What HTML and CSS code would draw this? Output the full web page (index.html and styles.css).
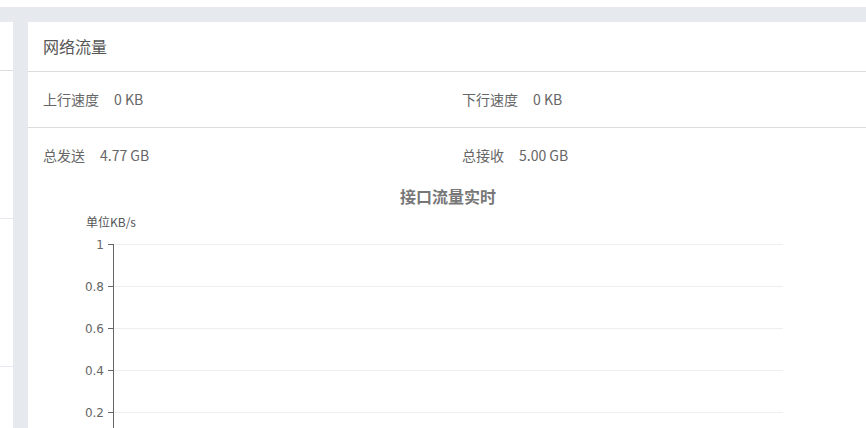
FILE: index.html
```html
<!DOCTYPE html>
<html lang="zh">
  <head>
    <meta charset="utf-8">
    <title>网络流量</title>
    <link rel="stylesheet" href="styles.css">
  </head>
  <body>
    <div class="topbar"></div>
    <div id="wrap">
      <div class="panel panel-side">
        <div class="side-head"></div>
        <div class="side-row"></div>
        <div class="side-row"></div>
      </div>

      <div class="panel panel-main">
        <div class="panel-head">网络流量</div>
        <div class="stat-row line">
          <div class="stat"><span class="label">上行速度</span><span class="value">0 KB</span></div>
          <div class="stat"><span class="label">下行速度</span><span class="value">0 KB</span></div>
        </div>
        <div class="stat-row total">
          <div class="stat"><span class="label">总发送</span><span class="value">4.77 GB</span></div>
          <div class="stat"><span class="label">总接收</span><span class="value">5.00 GB</span></div>
        </div>
        <div class="chart">
          <svg width="838" height="256" viewBox="0 0 838 256">
            <text class="chart-title" x="420" y="31" text-anchor="middle">接口流量实时</text>
            <text class="chart-unit" x="58" y="55">单位KB/s</text>
            <g class="grid">
              <line x1="85" y1="72.5" x2="755" y2="72.5"/>
              <line x1="85" y1="114.5" x2="755" y2="114.5"/>
              <line x1="85" y1="156.5" x2="755" y2="156.5"/>
              <line x1="85" y1="198.5" x2="755" y2="198.5"/>
              <line x1="85" y1="240.5" x2="755" y2="240.5"/>
            </g>
            <g class="axis">
              <line x1="85.5" y1="72" x2="85.5" y2="256"/>
              <line x1="80" y1="72.5" x2="85" y2="72.5"/>
              <line x1="80" y1="114.5" x2="85" y2="114.5"/>
              <line x1="80" y1="156.5" x2="85" y2="156.5"/>
              <line x1="80" y1="198.5" x2="85" y2="198.5"/>
              <line x1="80" y1="240.5" x2="85" y2="240.5"/>
            </g>
            <g class="ticks" text-anchor="end">
              <text x="76" y="77">1</text>
              <text x="76" y="119">0.8</text>
              <text x="76" y="161">0.6</text>
              <text x="76" y="203">0.4</text>
              <text x="76" y="245">0.2</text>
            </g>
          </svg>
        </div>
      </div>
    </div>
  </body>
</html>
```

FILE: styles.css
```css
* {
	margin:0;
	padding:0;
	box-sizing:border-box;
}

body {background:#e6e9ee;color:#666;font-size:14px;font-family:"Noto Sans CJK SC","Liberation Sans",sans-serif;overflow:hidden;height:428px;}
.topbar {height:7px;background:#fff;}
#wrap {display:flex;gap:15px;margin-top:15px;}

.panel {background:#fff;height:406px;}
.panel-side {flex:0 0 13px;}
.side-head {height:49px;border-bottom:1px solid #dcdcdc;}
.side-row {height:148px;border-bottom:1px solid #e6e8f3;}
.panel-main {flex:1;overflow:hidden;}

.panel-head {height:50px;line-height:49px;padding-left:15px;border-bottom:1px solid #dcdcdc;color:#555;font-size:16px;}

.stat-row {display:grid;grid-template-columns:1fr 1fr;}
.stat-row.line {height:56px;line-height:55px;border-bottom:1px solid #dcdcdc;}
.stat-row.total {line-height:20px;padding:17px 0 7px;}
.stat {padding-left:15px;}
.stat .label {display:inline-block;margin-right:15px;}

.chart svg {display:block;}
.chart-title {font-size:16px;font-weight:bold;fill:#777;}
.chart-unit {font-size:12px;fill:#555;}
.grid line {stroke:#eeeeee;stroke-width:1;}
.axis line {stroke:#666;stroke-width:1;}
.ticks text {font-size:12px;fill:#666;font-family:"DejaVu Sans",sans-serif;}
```
